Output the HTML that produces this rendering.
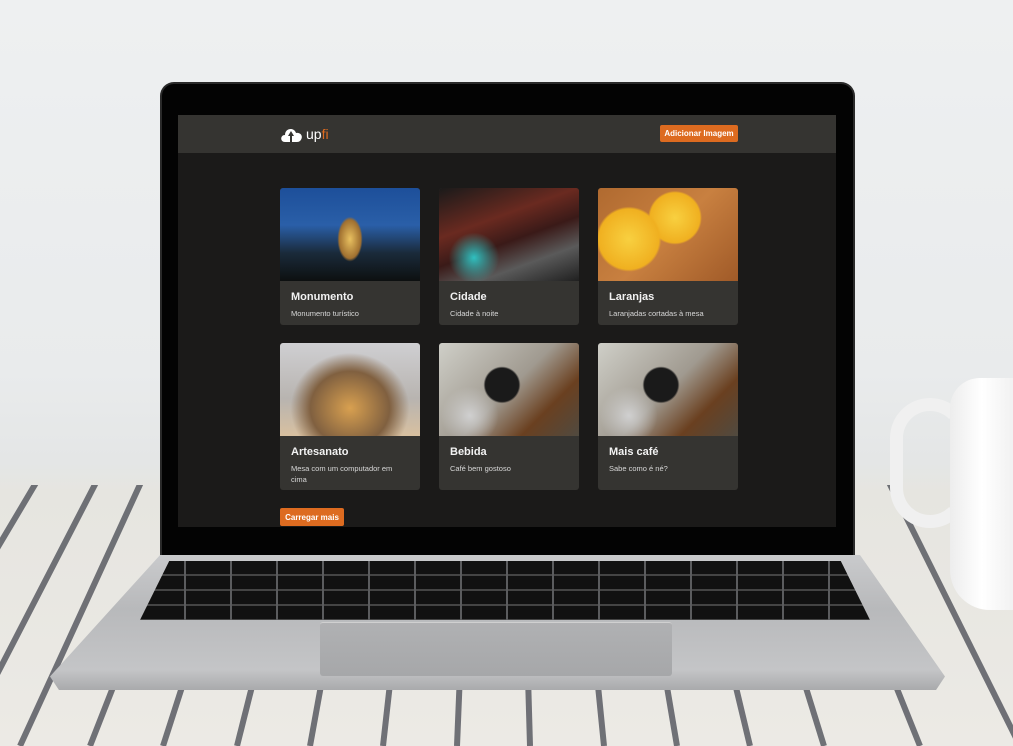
<!DOCTYPE html>
<html><head><meta charset="utf-8"><style>
*{margin:0;padding:0;box-sizing:border-box}
body{width:1013px;height:746px;overflow:hidden;position:relative;font-family:"Liberation Sans",sans-serif;
background:linear-gradient(180deg,#eef0f1 0%,#e9ebec 50%,#e4e6e6 62%,#e6e5e0 66%,#eceae5 100%)}
.abs{position:absolute}
.mug{left:950px;top:378px;width:80px;height:232px;background:linear-gradient(90deg,#ededed,#fff 40%,#eaeaea);border-radius:30px 0 0 40px}
.handle{left:890px;top:398px;width:80px;height:130px;border:13px solid #f0f0f0;border-radius:40px;border-right-color:transparent}
.lid{left:160px;top:82px;width:695px;height:475px;background:#030303;border-radius:14px 14px 0 0;border:2px solid #2a2a2a;border-bottom:none}
.screen{left:178px;top:115px;width:658px;height:412px;background:#1b1a19}
.hdr{left:178px;top:115px;width:658px;height:38px;background:#353431}
.btn{background:#dd6b20;color:#fff;font-size:8px;font-weight:bold;border-radius:2px;display:flex;align-items:center;justify-content:center}
.card{background:#353431;border-radius:3px;overflow:hidden;width:140px}
.card .img{height:93px}
.card h3{color:#f2f2f2;font-size:11px;font-weight:bold;margin:10px 0 0 11px}
.card p{color:#d8d8d8;font-size:7.5px;margin:5px 11px 0 11px;line-height:11px}
.base{left:50px;top:555px;width:895px;height:135px;background:linear-gradient(180deg,#c9cacc 0%,#b8b9bb 40%,#c4c5c7 85%,#a9aaac 100%);
clip-path:polygon(12.3% 0,90.5% 0,100% 90%,99% 100%,1% 100%,0 90%)}
.kb{left:140px;top:561px;width:730px;height:59px;background:
repeating-linear-gradient(90deg,transparent 0 44px,#5b5c5e 44px 46px),repeating-linear-gradient(180deg,#111 0 13px,#444 13px 15px);
clip-path:polygon(4% 0,96% 0,100% 100%,0 100%)}
.pad{left:320px;top:622px;width:352px;height:54px;background:linear-gradient(180deg,#b0b1b3,#a6a7a9);border-radius:3px;border-top:1px solid #d0d0d0}
</style></head><body>
<svg class="abs" style="left:0;top:0" width="1013" height="746">
<defs><clipPath id="c"><rect x="0" y="485" width="1013" height="261"/></clipPath></defs>
<g clip-path="url(#c)" stroke="#5a5c63" stroke-width="6" opacity=".85">
<line x1="-120" y1="746" x2="500" y2="-300"/>
<line x1="-40" y1="746" x2="500" y2="-300"/>
<line x1="20" y1="746" x2="500" y2="-300"/>
<line x1="90" y1="746" x2="500" y2="-300"/>
<line x1="163" y1="746" x2="500" y2="-300"/>
<line x1="237" y1="746" x2="500" y2="-300"/>
<line x1="310" y1="746" x2="500" y2="-300"/>
<line x1="383" y1="746" x2="500" y2="-300"/>
<line x1="457" y1="746" x2="500" y2="-300"/>
<line x1="530" y1="746" x2="500" y2="-300"/>
<line x1="604" y1="746" x2="500" y2="-300"/>
<line x1="677" y1="746" x2="500" y2="-300"/>
<line x1="750" y1="746" x2="500" y2="-300"/>
<line x1="824" y1="746" x2="500" y2="-300"/>
<line x1="920" y1="746" x2="500" y2="-300"/>
<line x1="1020" y1="746" x2="500" y2="-300"/>
<line x1="1120" y1="746" x2="500" y2="-300"/>
</g></svg>
<div class="abs handle"></div>
<div class="abs mug"></div>
<div class="abs lid"></div>
<div class="abs screen"></div>
<div class="abs hdr"></div>
<div class="abs" style="left:280px;top:125px;display:flex;align-items:center">
<svg width="24" height="18" viewBox="0 0 24 18"><path d="M5 17 C0 17 0 10 5 10 C5 3 14 2 16 8 C21 7 24 12 20 16 Q19 17 17 17 Z" fill="#fff"/><path d="M11 6 L8 11 H10 V17 H12 V11 H14 Z" fill="#353431"/></svg>
<span style="color:#fff;font-size:14px;margin-left:2px">up</span><span style="color:#dd6b20;font-size:14px">fi</span></div>
<div class="abs btn" style="left:660px;top:125px;width:78px;height:17px">Adicionar Imagem</div>

<div class="abs card" style="left:280px;top:188px;height:137px"><div class="img" style="background:radial-gradient(ellipse 18px 32px at 50% 55%,#e8c060,#a07030 60%,transparent 70%),linear-gradient(180deg,#1d4f9a 0%,#2a5fa8 40%,#1a2a3a 70%,#0d1010 100%)"></div><h3>Monumento</h3><p>Monumento turístico</p></div>
<div class="abs card" style="left:439px;top:188px;height:137px"><div class="img" style="background:radial-gradient(circle at 25% 75%,#30c0c0,transparent 20%),linear-gradient(160deg,#1a1a1a 0%,#6a2a20 35%,#3a1a18 55%,#5a5a5a 75%,#202020 100%)"></div><h3>Cidade</h3><p>Cidade à noite</p></div>
<div class="abs card" style="left:598px;top:188px;height:137px"><div class="img" style="background:radial-gradient(circle at 22% 55%,#f8d040 0,#f0b020 25%,transparent 27%),radial-gradient(circle at 55% 32%,#f8d040 0,#f0b020 25%,transparent 27%),linear-gradient(135deg,#b06a30,#c88040 50%,#a05a28)"></div><h3>Laranjas</h3><p>Laranjadas cortadas à mesa</p></div>

<div class="abs card" style="left:280px;top:343px;height:147px"><div class="img" style="background:radial-gradient(ellipse at 50% 70%,#d8a050,#806040 40%,transparent 60%),linear-gradient(180deg,#cfcfd2,#b8b4b0 60%,#d8c0a0)"></div><h3>Artesanato</h3><p>Mesa com um computador em cima</p></div>
<div class="abs card" style="left:439px;top:343px;height:147px"><div class="img" style="background:radial-gradient(circle at 45% 45%,#1a1a1a 0,#1a1a1a 18%,transparent 20%),radial-gradient(circle at 22% 78%,#d0d0d0,transparent 22%),linear-gradient(135deg,#cfcfc8,#a09a90 50%,#6a4020 75%,#504a40)"></div><h3>Bebida</h3><p>Café bem gostoso</p></div>
<div class="abs card" style="left:598px;top:343px;height:147px"><div class="img" style="background:radial-gradient(circle at 45% 45%,#1a1a1a 0,#1a1a1a 18%,transparent 20%),radial-gradient(circle at 22% 78%,#d0d0d0,transparent 22%),linear-gradient(135deg,#cfcfc8,#a09a90 50%,#6a4020 75%,#504a40)"></div><h3>Mais café</h3><p>Sabe como é né?</p></div>

<div class="abs btn" style="left:280px;top:508px;width:64px;height:18px">Carregar mais</div>

<div class="abs base"></div>
<div class="abs kb"></div>
<div class="abs pad"></div>
</body></html>
